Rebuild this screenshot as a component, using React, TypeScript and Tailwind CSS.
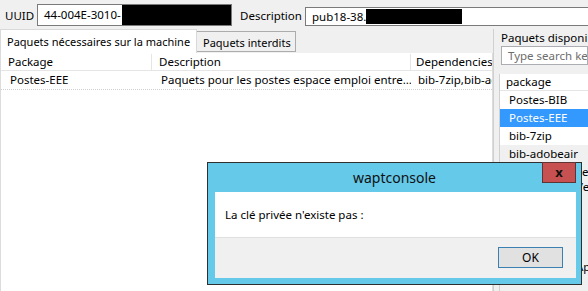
const packages = [
  { name: "Postes-BIB", selected: false },
  { name: "Postes-EEE", selected: true },
  { name: "bib-7zip", selected: false },
];

function Redacted({ className }: { className: string }) {
  return <span className={`block bg-black ${className}`} />;
}

function MessageBox() {
  return (
    <div className="absolute left-[207px] top-[162px] w-[375px] h-[123px] border border-[#2f2f2f] bg-[#65c9ea] flex flex-col">
      <div className="relative h-[29px] flex items-center justify-center text-[14px] text-[#111]">
        waptconsole
        <div className="absolute right-[5px] top-[-1px] w-[34px] h-[21px] bg-[#c75050] border border-[#5e3535] flex items-center justify-center text-[13px] font-bold leading-none">
          x
        </div>
      </div>
      <div className="ml-[7px] mr-[5px] flex-1 flex flex-col">
        <div className="h-[46px] bg-white flex items-center pl-[10px] border-b border-[#dfdfdf]">
          La clé privée n'existe pas :
        </div>
        <div className="h-[40px] bg-[#f0f0f0] flex justify-end items-start pt-[9px] pr-[13px]">
          <div className="w-[65px] h-[21px] border border-[#3c7fb1] bg-[#e1e1e1] flex items-center justify-center text-[12px]">
            OK
          </div>
        </div>
      </div>
    </div>
  );
}

export default function App() {
  return (
    <div className="relative w-[588px] h-[291px] overflow-hidden bg-[#f0f0f0] text-[11.5px] leading-none text-black whitespace-nowrap font-['Noto_Sans',sans-serif]">
      {/* identification bar */}
      <div className="h-[29px] flex items-start">
        <span className="shrink-0 w-[37px] pl-[5px] mt-[10px]">UUID</span>
        <div className="shrink-0 mt-[4px] w-[195px] h-[22px] border border-[#7a7a7a] bg-white flex items-center pl-[6px]">
          <span className="pr-[1px]">44-004E-3010-</span>
          <Redacted className="flex-1 h-[20px]" />
        </div>
        <span className="shrink-0 w-[73px] pl-[8px] mt-[10px]">Description</span>
        <div className="shrink-0 mt-[7px] w-[300px] h-[19px] border border-[#7a7a7a] bg-white flex items-center pl-[6px]">
          <span>pub18-38.</span>
          <Redacted className="w-[96px] h-[15px]" />
        </div>
      </div>

      <div className="flex h-[262px]">
        {/* machine packages */}
        <div className="shrink-0 w-[493px] flex flex-col">
          <div className="h-[24px] flex items-end text-[11px]">
            <div className="w-[197px] h-[24px] bg-white border border-b-0 border-[#d9d9d9] pl-[6px] pt-[6px]">
              Paquets nécessaires sur la machine
            </div>
            <div className="w-[99px] h-[21px] mb-[1px] bg-[#f0f0f0] border border-l-0 border-[#acacac] pl-[6px] pt-[5px]">
              Paquets interdits
            </div>
          </div>
          <div className="flex-1 bg-white border-l border-r border-[#dcdcdc] flex flex-col">
            <div className="h-[17px] mt-[1px] flex border-b border-[#e5e5e5]">
              <div className="w-[151px] pl-[7px] flex items-center border-r border-[#e5e5e5]">Package</div>
              <div className="w-[259px] pl-[7px] flex items-center border-r border-[#e5e5e5]">Description</div>
              <div className="flex-1 pl-[5px] flex items-center overflow-hidden">Dependencies</div>
            </div>
            <div className="h-[19px] flex border-b border-dotted border-[#d0d0d0]">
              <div className="w-[151px] pl-[9px] flex items-center">Postes-EEE</div>
              <div className="w-[259px] pl-[9px] flex items-center overflow-hidden">
                Paquets pour les postes espace emploi entre...
              </div>
              <div className="flex-1 pl-[7px] flex items-center overflow-hidden">bib-7zip,bib-adobeair</div>
            </div>
          </div>
        </div>

        {/* available packages */}
        <div className="flex-1 flex flex-col pl-[5px] border-l border-[#d0d0d0] min-w-0">
          <div className="pl-[2px] pt-[3px] h-[17px] overflow-hidden">Paquets disponibles</div>
          <div className="ml-[2px] h-[19px] border border-[#abadb3] bg-white flex items-center pl-[6px] text-[#6d6d6d] overflow-hidden">
            Type search keywords
          </div>
          <div className="mt-[9px] bg-white border-l border-[#d0d0d0] flex flex-col">
            <div className="h-[17px] pl-[6px] flex items-center border-b border-[#e5e5e5]">package</div>
            {packages.map((p) => (
              <div
                key={p.name}
                className={`h-[18px] pl-[9px] flex items-center ${p.selected ? "bg-[#3399ff] text-white" : ""}`}
              >
                {p.name}
              </div>
            ))}
          </div>
          <div className="h-[17px] pl-[9px] flex items-center border-l border-[#d0d0d0] bg-[#f0f0f0]">bib-adobeair</div>
          <div className="flex-1 border-l border-[#d0d0d0] pl-[76px] pt-[4px] flex flex-col gap-[3px] overflow-hidden">
            <span>Le</span>
            <span>Ver</span>
            <span className="mt-[66px]">Ap</span>
          </div>
        </div>
      </div>

      <MessageBox />
    </div>
  );
}
